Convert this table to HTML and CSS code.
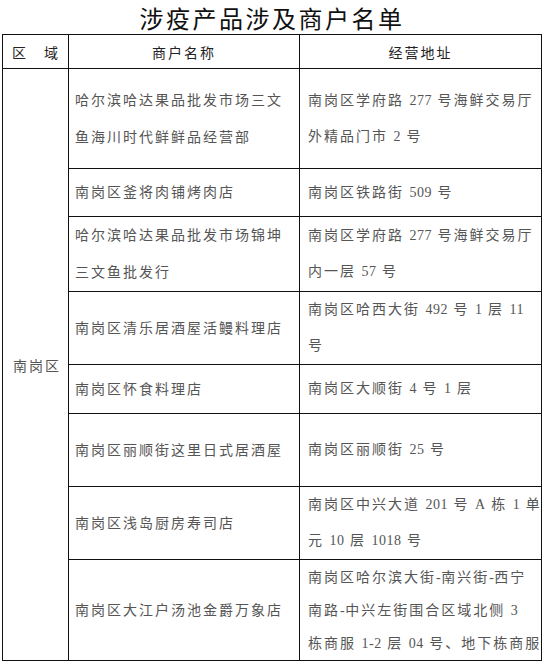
FILE: index.html
```html
<!DOCTYPE html>
<html lang="zh-CN">
<head>
<meta charset="utf-8">
<title>涉疫产品涉及商户名单</title>
<link rel="stylesheet" href="styles.css">
</head>
<body>
<h1 class="title">涉疫产品涉及商户名单</h1>
<table class="list">
  <colgroup>
    <col class="c-area">
    <col class="c-name">
    <col class="c-addr">
  </colgroup>
  <thead>
    <tr class="r-head">
      <th class="h-area">区　域</th>
      <th class="h-center">商户名称</th>
      <th class="h-center">经营地址</th>
    </tr>
  </thead>
  <tbody>
    <tr class="r1">
      <td class="area" rowspan="8">南岗区</td>
      <td class="name">哈尔滨哈达果品批发市场三文<br>鱼海川时代鲜鲜品经营部</td>
      <td class="addr">南岗区学府路 <span class="n">277</span> 号海鲜交易厅<br>外精品门市 <span class="n">2</span> 号</td>
    </tr>
    <tr class="r2">
      <td class="name">南岗区釜将肉铺烤肉店</td>
      <td class="addr">南岗区铁路街 <span class="n">509</span> 号</td>
    </tr>
    <tr class="r3">
      <td class="name">哈尔滨哈达果品批发市场锦坤<br>三文鱼批发行</td>
      <td class="addr">南岗区学府路 <span class="n">277</span> 号海鲜交易厅<br>内一层 <span class="n">57</span> 号</td>
    </tr>
    <tr class="r4">
      <td class="name">南岗区清乐居酒屋活鳗料理店</td>
      <td class="addr">南岗区哈西大街 <span class="n">492</span> 号 <span class="n">1</span> 层 <span class="n">11</span><br>号</td>
    </tr>
    <tr class="r5">
      <td class="name">南岗区怀食料理店</td>
      <td class="addr">南岗区大顺街 <span class="n">4</span> 号 <span class="n">1</span> 层</td>
    </tr>
    <tr class="r6">
      <td class="name">南岗区丽顺街这里日式居酒屋</td>
      <td class="addr">南岗区丽顺街 <span class="n">25</span> 号</td>
    </tr>
    <tr class="r7">
      <td class="name">南岗区浅岛厨房寿司店</td>
      <td class="addr">南岗区中兴大道 <span class="n">201</span> 号 <span class="n">A</span> 栋 <span class="n">1</span> 单<br>元 <span class="n">10</span> 层 <span class="n">1018</span> 号</td>
    </tr>
    <tr class="r8">
      <td class="name">南岗区大江户汤池金爵万象店</td>
      <td class="addr tight">南岗区哈尔滨大街<span class="n">-</span>南兴街<span class="n">-</span>西宁<br>南路<span class="n">-</span>中兴左街围合区域北侧 <span class="n">3</span><br>栋商服 <span class="n">1-2</span> 层 <span class="n">04</span> 号、地下栋商服</td>
    </tr>
  </tbody>
</table>
</body>
</html>
```

FILE: styles.css
```css
html, body {
  margin: 0;
  padding: 0;
  background: #ffffff;
}

body {
  width: 544px;
  height: 663px;
  overflow: hidden;
  font-family: "Liberation Serif", "Noto Sans CJK SC", serif;
  color: #555555;
}

.title {
  margin: 0;
  height: 34px;
  line-height: 36px;
  text-align: center;
  font-family: "Noto Sans CJK SC", sans-serif;
  font-size: 24px;
  font-weight: 400;
  letter-spacing: 2.5px;
  color: #111111;
}

.list {
  margin-left: 2px;
  width: 539px;
  table-layout: fixed;
  border-collapse: collapse;
  font-size: 14px;
  letter-spacing: 2px;
}

.c-area { width: 66px; }
.c-name { width: 231px; }
.c-addr { width: 242px; }

.list th,
.list td {
  border: 1px solid #111111;
  padding: 0;
  vertical-align: middle;
  white-space: nowrap;
  overflow: hidden;
}

.list th {
  font-weight: 400;
  color: #222222;
  height: 33px;
}

.list .h-area {
  text-align: left;
  padding-left: 9px;
}

.list .h-center {
  text-align: center;
}

.list .area {
  padding-left: 10px;
}

.list .name {
  padding-left: 6px;
  line-height: 37px;
}

.list .addr {
  padding-left: 8px;
  line-height: 36px;
}

.list .addr.tight {
  line-height: 33px;
}

.n {
  letter-spacing: 0.5px;
}

.r1 td { height: 99px; }
.r2 td { height: 47px; }
.r3 td { height: 73px; }
.r4 td { height: 71px; }
.r5 td { height: 48px; }
.r6 td { height: 72px; }
.r7 td { height: 66px; }
.r8 td { height: 100px; }
```
